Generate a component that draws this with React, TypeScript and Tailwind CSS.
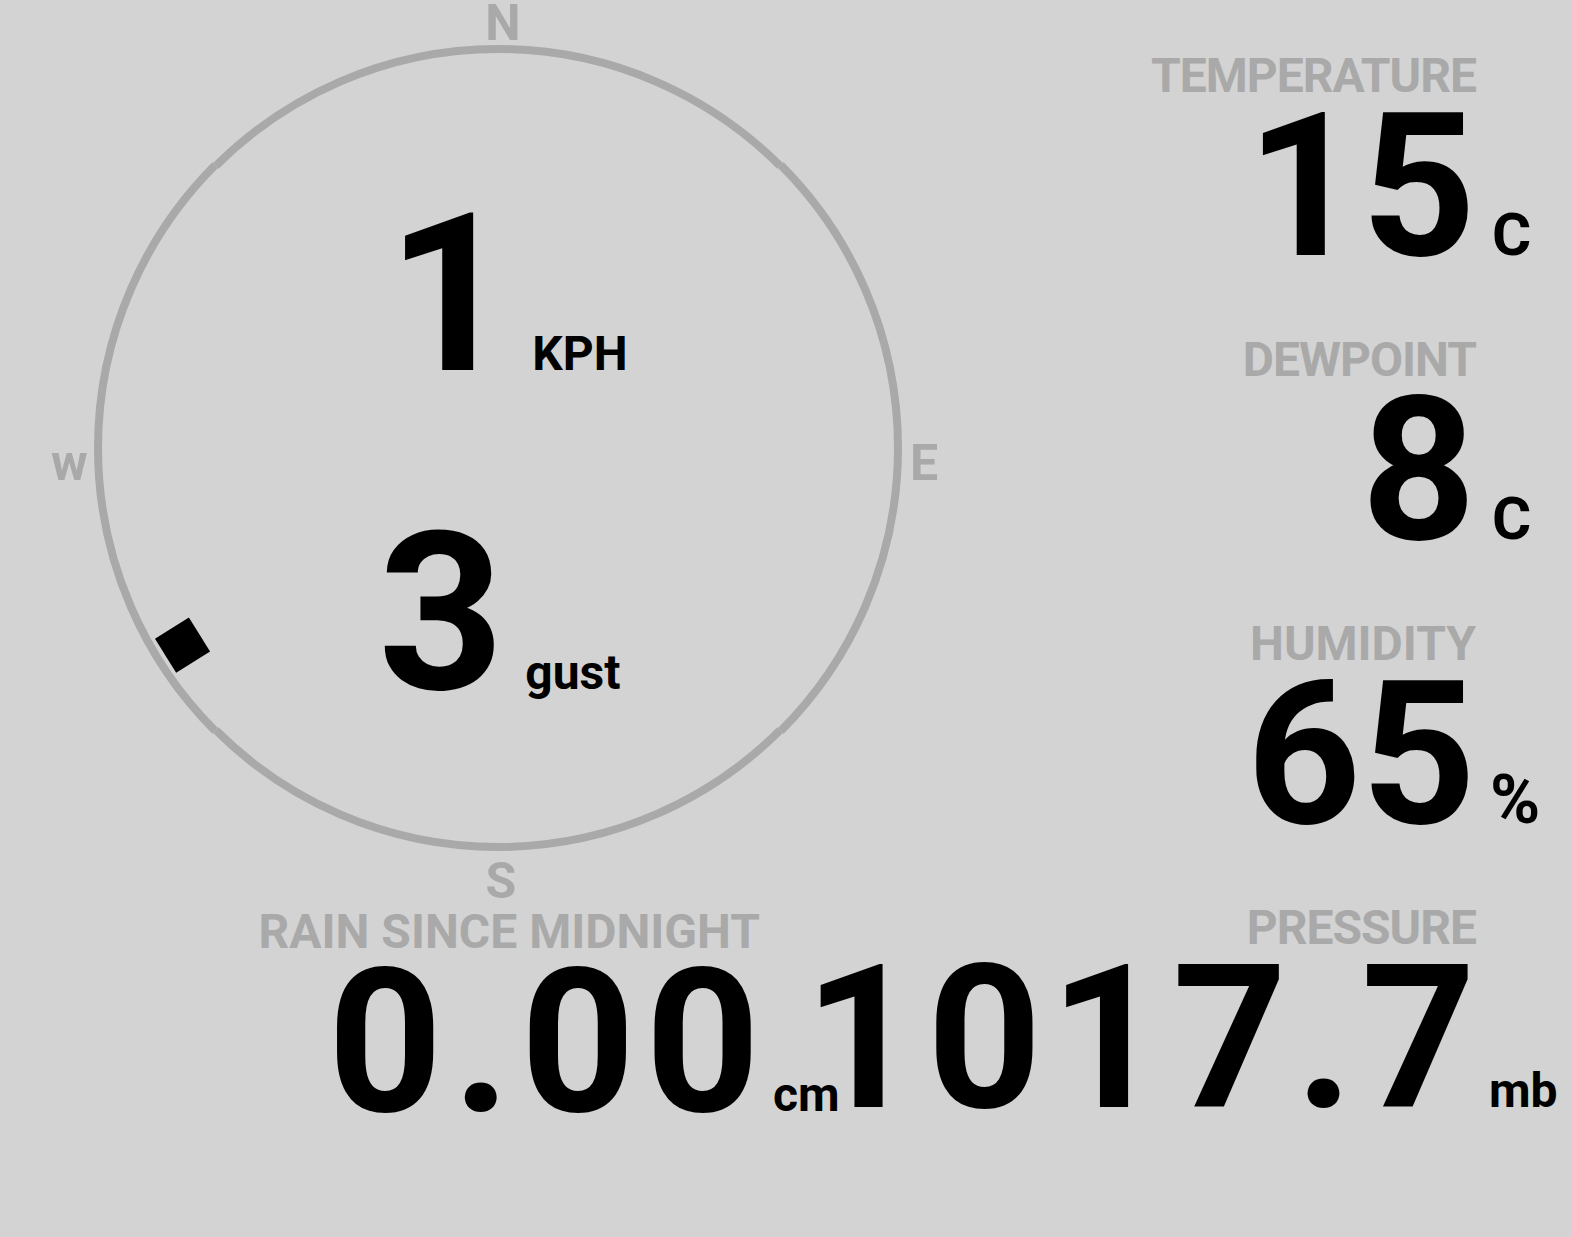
import React from 'react'

const CX = 498
const CY = 448

// compass degrees: 0 = north, clockwise
const pt = (deg: number, r: number) => {
  const a = (deg * Math.PI) / 180
  return `${(CX + r * Math.sin(a)).toFixed(2)} ${(CY - r * Math.cos(a)).toFixed(2)}`
}

const arc = (from: number, to: number, r: number) =>
  `M ${pt(from, r)} A ${r} ${r} 0 0 1 ${pt(to, r)}`

function Gauge({ speed, gust, bearing }: { speed: number; gust: number; bearing: number }) {
  return (
    <div className="relative h-[908px] w-[996px]">
      <svg className="absolute inset-0" width={996} height={908} viewBox="0 0 996 908">
        <g fill="none" stroke="#a9a9a9" strokeWidth={8}>
          <path d={arc(-45, 45, 399)} />
          <path d={arc(45, 135, 400)} />
          <path d={arc(135, 225, 399)} />
          <path d={arc(225, 315, 400)} />
        </g>
        {/* wind direction marker */}
        <rect
          x={CX - 20}
          y={CY - 372 - 20}
          width={40}
          height={40}
          fill="#000"
          transform={`rotate(${bearing} ${CX} ${CY})`}
        />
      </svg>

      {/* compass points */}
      <span className="absolute left-[503px] top-[-2px] -translate-x-1/2 text-[50px] leading-none text-[#a9a9a9]">N</span>
      <span className="absolute left-[910px] top-[438px] text-[50px] leading-none text-[#a9a9a9]">E</span>
      <span className="absolute left-[501px] top-[856px] -translate-x-1/2 text-[50px] leading-none text-[#a9a9a9]">S</span>
      <span className="absolute left-[51px] top-[438px] text-[50px] leading-none text-[#a9a9a9]">w</span>

      {/* speed + gust */}
      <div className="relative flex flex-col pt-[185px]">
        <div className="flex items-baseline pl-[387px]">
          <span className="text-[220px] leading-[220px]">{speed}</span>
          <span className="ml-[19px] text-[48px] leading-none">KPH</span>
        </div>
        <div className="mt-[99px] flex items-baseline pl-[378px]">
          <span className="text-[220px] leading-[220px]">{gust}</span>
          <span className="ml-[21px] text-[48px] leading-none">gust</span>
        </div>
      </div>
    </div>
  )
}

function Reading({
  label,
  value,
  unit,
  labelClass = '',
  valueClass = '',
  unitClass = '',
}: {
  label: string
  value: string
  unit: string
  labelClass?: string
  valueClass?: string
  unitClass?: string
}) {
  return (
    <div className="flex flex-col items-end">
      <div className={`whitespace-nowrap text-[48px] leading-[48px] text-[#a9a9a9] ${labelClass}`}>{label}</div>
      <div className="flex items-baseline whitespace-nowrap">
        <span className={`text-[200px] leading-[174px] ${valueClass}`}>{value}</span>
        <span className="w-0 overflow-visible whitespace-nowrap">
          <span className={`leading-none ${unitClass}`}>{unit}</span>
        </span>
      </div>
    </div>
  )
}

export default function App() {
  return (
    <div className="h-screen w-full overflow-hidden bg-[#d3d3d3] font-[family-name:Roboto,sans-serif] font-bold text-black">
      <div className="flex">
        {/* left: wind gauge and rain */}
        <div className="flex w-[1000px] shrink-0 flex-col">
          <Gauge speed={1} gust={3} bearing={238} />
          <div className="flex w-[760px] flex-col items-end">
            <Reading
              label="RAIN SINCE MIDNIGHT"
              value="0.00"
              unit="cm"
              valueClass="tracking-[10px] -mr-[10px]"
              unitClass="ml-[13px] text-[48px]"
            />
          </div>
        </div>

        {/* right: readings */}
        <div className="flex min-w-0 flex-1 flex-col items-end gap-[62px] pr-[95px] pt-[52px]">
          <Reading
            label="TEMPERATURE"
            value="15"
            unit="C"
            labelClass="tracking-[-1px]"
            unitClass="ml-[16px] text-[60px]"
          />
          <Reading label="DEWPOINT" value="8" unit="C" labelClass="tracking-[-1px]" unitClass="ml-[16px] text-[60px]" />
          <Reading label="HUMIDITY" value="65" unit="%" unitClass="ml-[14px] text-[68px]" />
          <Reading
            label="PRESSURE"
            value="1017.7"
            unit="mb"
            labelClass="tracking-[-1px]"
            valueClass="tracking-[8px] -mr-[8px]"
            unitClass="ml-[13px] text-[48px]"
          />
        </div>
      </div>
    </div>
  )
}
